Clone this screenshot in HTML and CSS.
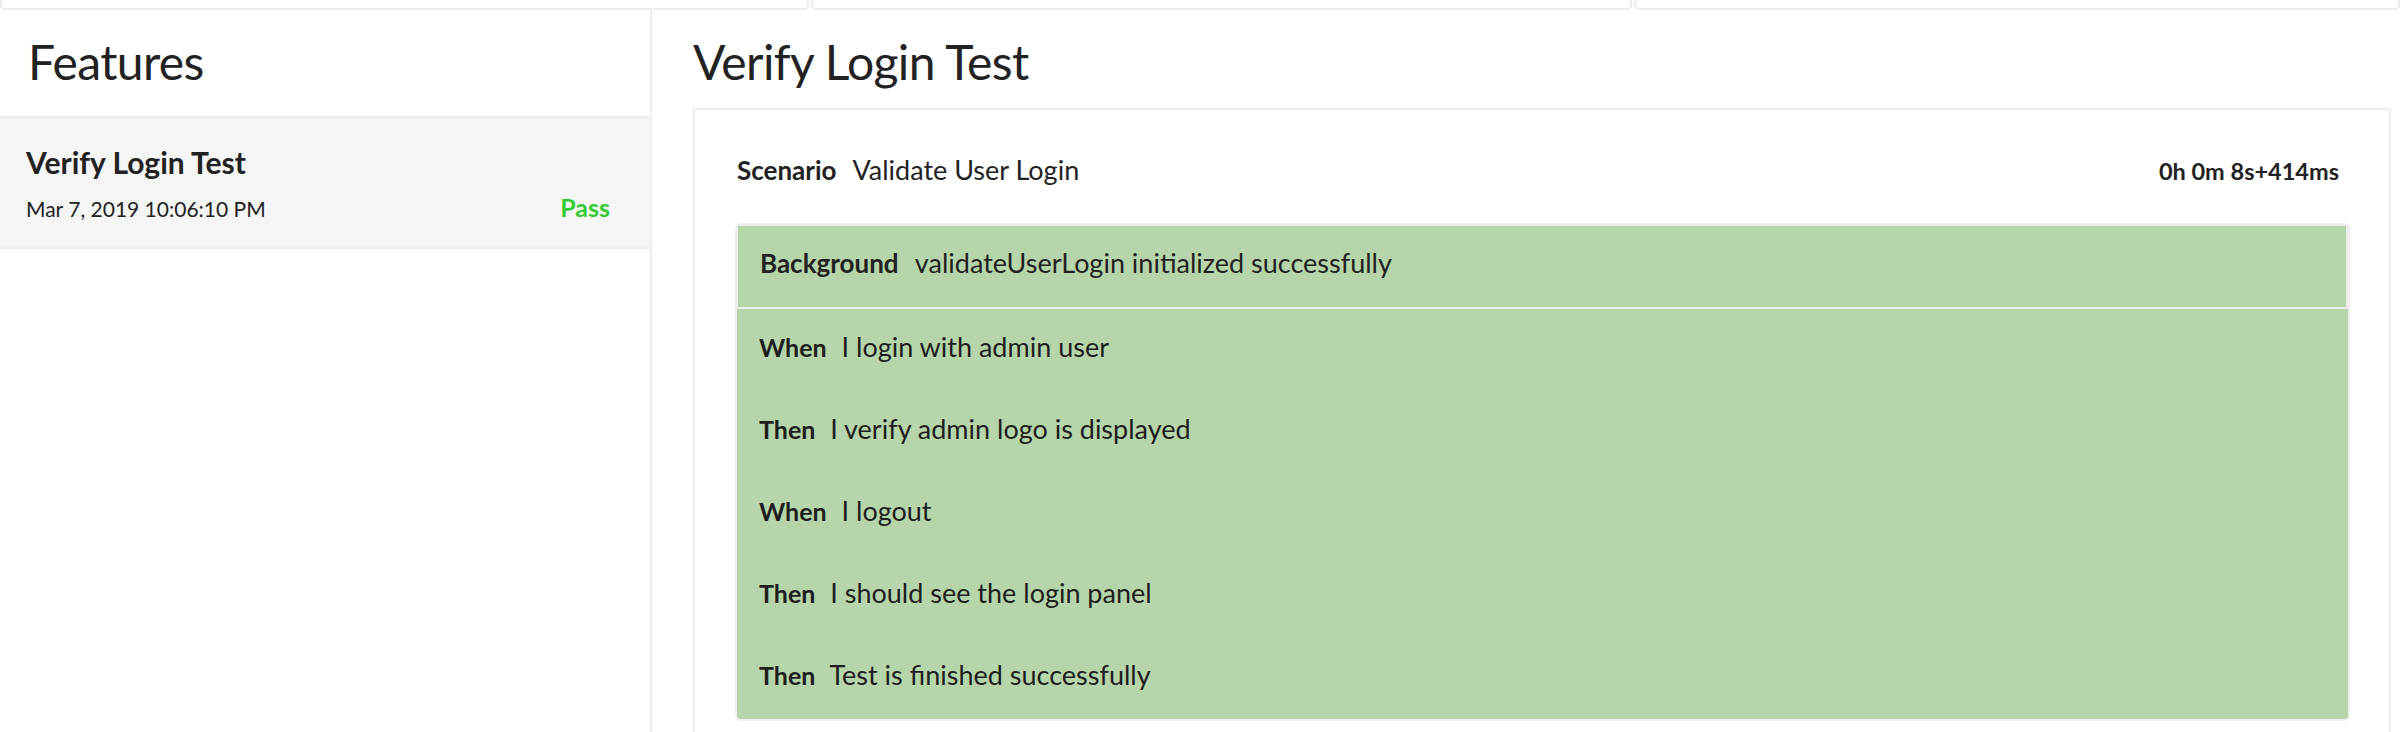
FILE: index.html
```html
<!DOCTYPE html>
<html lang="en">
<head>
<meta charset="utf-8">
<title>Features</title>
<link rel="stylesheet" href="styles.css">
</head>
<body>
<div class="topbar">
  <div class="tab"></div>
  <div class="tab"></div>
  <div class="tab"></div>
</div>
<div class="layout">
  <aside class="sidebar">
    <h2 class="side-title">Features</h2>
    <div class="feature-item">
      <div class="feature-name">Verify Login Test</div>
      <div class="feature-meta">
        <span class="feature-date">Mar 7, 2019 10:06:10 PM</span>
        <span class="status-pass">Pass</span>
      </div>
    </div>
  </aside>
  <main class="content">
    <h2 class="main-title">Verify Login Test</h2>
    <section class="card">
      <div class="scenario-head">
        <div class="scenario-name"><span class="kw">Scenario</span> Validate User Login</div>
        <div class="duration">0h 0m 8s+414ms</div>
      </div>
      <div class="steps">
        <div class="bg-row"><span class="kw">Background</span> validateUserLogin initialized successfully</div>
        <ul class="step-list">
          <li class="step"><span class="kw">When</span> I login with admin user</li>
          <li class="step"><span class="kw">Then</span> I verify admin logo is displayed</li>
          <li class="step"><span class="kw">When</span> I logout</li>
          <li class="step"><span class="kw">Then</span> I should see the login panel</li>
          <li class="step"><span class="kw">Then</span> Test is finished successfully</li>
        </ul>
      </div>
    </section>
  </main>
</div>
</body>
</html>
```

FILE: styles.css
```css
* { box-sizing: border-box; }

html, body {
  margin: 0;
  padding: 0;
  background: #fff;
  color: #222;
  font-family: Lato, "Open Sans", "Liberation Sans", sans-serif;
  overflow: hidden;
}

.topbar {
  display: grid;
  grid-template-columns: 809px 821px 1fr;
  column-gap: 2px;
  height: 10px;
}

.tab {
  border: 2px solid #ececec;
  border-top: none;
  border-radius: 0 0 5px 5px;
  height: 10px;
}

.layout {
  display: flex;
  align-items: stretch;
  min-height: 722px;
}

.sidebar {
  width: 652px;
  flex: 0 0 652px;
  border-right: 2px solid #eee;
}

.side-title,
.main-title {
  margin: 0;
  font-weight: 400;
  font-size: 48px;
  letter-spacing: -0.6px;
  line-height: 60px;
  color: #222;
}

.side-title {
  padding: 22px 28px 24px;
}

.feature-item {
  background: #f5f5f5;
  border-top: 2px solid #ececec;
  border-bottom: 2px solid #ececec;
  padding: 26px 40px 22px 26px;
}

.feature-name {
  font-weight: 700;
  font-size: 30px;
  line-height: 36px;
}

.feature-meta {
  display: flex;
  justify-content: space-between;
  align-items: baseline;
  margin-top: 11px;
  line-height: 32px;
}

.feature-date {
  font-size: 21px;
}

.status-pass {
  color: #33cc33;
  font-weight: 700;
  font-size: 25px;
}

.content {
  flex: 1;
  padding: 22px 9px 0 41px;
}

.main-title {
  padding: 0 0 16px;
}

.card {
  border: 2px solid #eee;
  border-bottom: none;
  padding: 40px 39px 40px 40px;
  min-height: 700px;
}

.scenario-head {
  display: flex;
  justify-content: space-between;
  align-items: baseline;
  padding: 0 11px 0 2px;
  margin-bottom: 32px;
  line-height: 40px;
}

.scenario-name {
  font-size: 27px;
}

.kw {
  font-weight: 700;
  font-size: 26px;
  margin-right: 10px;
}

.step .kw {
  font-size: 25px;
  margin-right: 8px;
}

.duration {
  font-weight: 700;
  font-size: 23.5px;
}

.steps {
  border: 2px solid #eee;
  border-radius: 6px;
  background: #b7d5aa;
  overflow: hidden;
}

.bg-row {
  border: 1px solid #eee;
  border-right-width: 2px;
  border-bottom-width: 2px;
  padding: 17px 22px 24px 22px;
  font-size: 27px;
  line-height: 40px;
}

.step-list {
  list-style: none;
  margin: 0;
  padding: 0;
}

.step {
  padding: 18px 22px 24px;
  font-size: 27px;
  line-height: 40px;
  color: #1e1e1e;
}
```
